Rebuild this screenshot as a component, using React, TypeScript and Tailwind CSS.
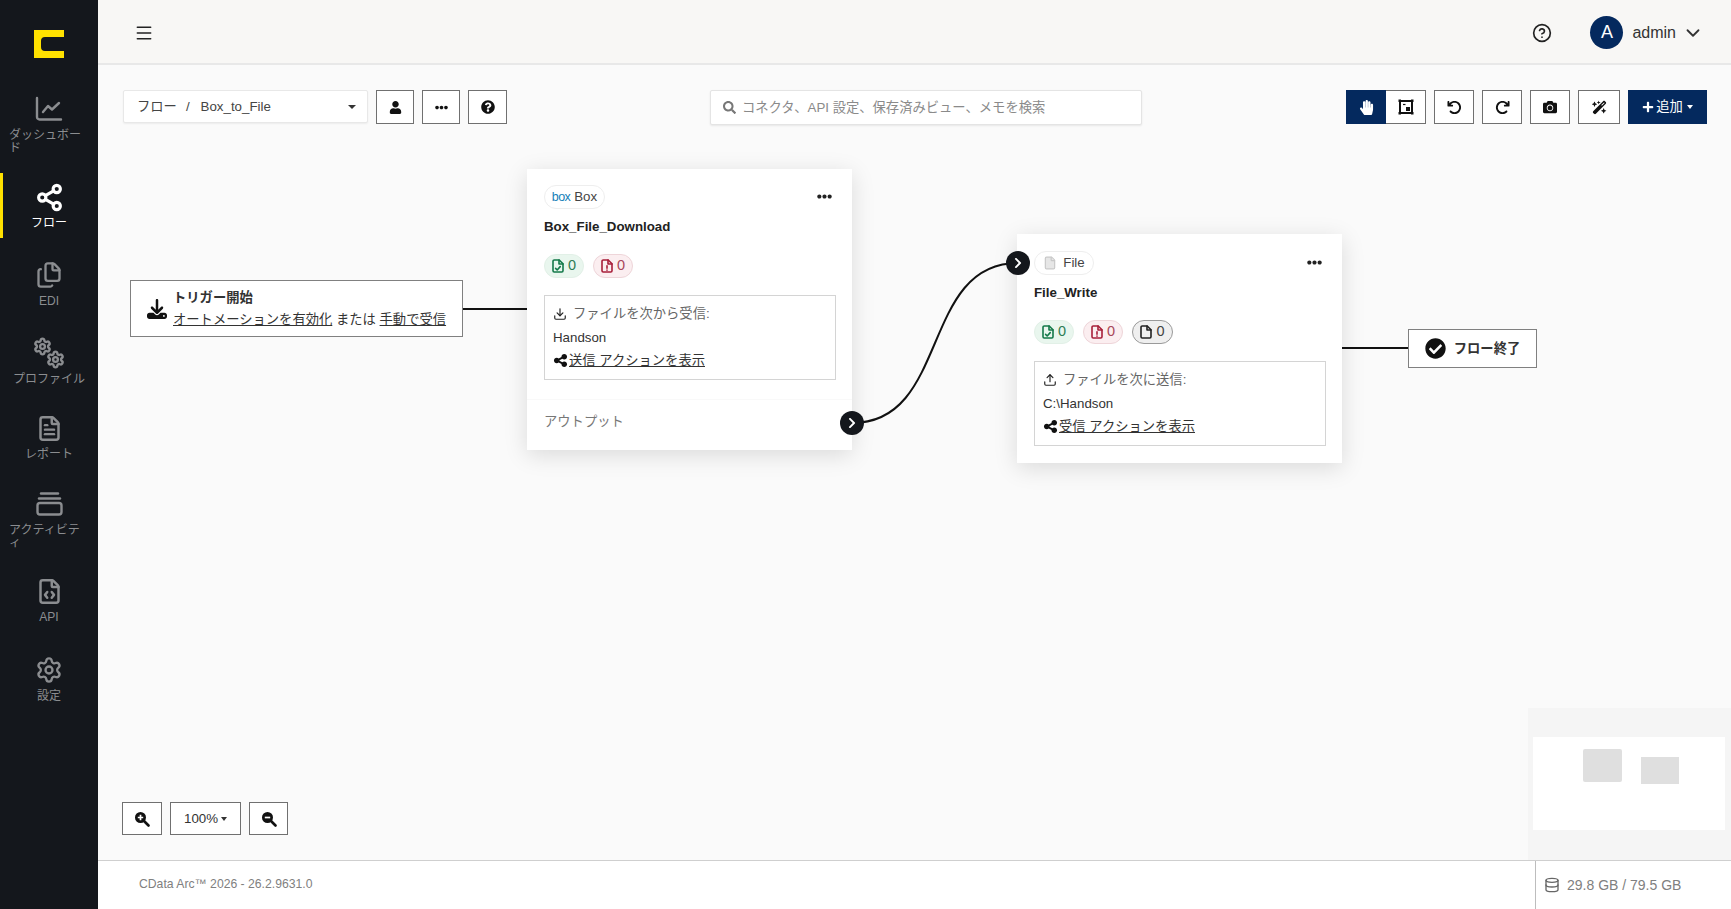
import React from "react";
import { ChevronDown, CircleHelp, Database, Download, File as FileIcon, FileCode, FileText, Files, Menu, Settings, Share2, Upload } from "lucide-react";
import { FaCamera, FaCheckCircle, FaChevronRight, FaEllipsisH, FaHandPaper, FaPlus, FaQuestionCircle, FaSearch, FaUser } from "react-icons/fa";
import { FaArrowRotateLeft, FaArrowRotateRight, FaDownload, FaShareNodes, FaWandMagicSparkles } from "react-icons/fa6";

const FONT = "font-['Liberation_Sans','Noto_Sans_CJK_JP',sans-serif]";

function ChartIcon() {
  return (
    <svg width="28" height="26" viewBox="0 0 28 26" fill="none" stroke="currentColor" strokeWidth="2.4" strokeLinecap="round" strokeLinejoin="round">
      <path d="M2 2v19a2.5 2.5 0 0 0 2.5 2.5H26" />
      <path d="M8 16l5-6 4 3.5 7-6.5" />
    </svg>
  );
}
function CogsIcon() {
  return (
    <svg width="32" height="32" viewBox="0 0 32 32" fill="none" className="text-[#8b8d90]">
      <Settings x={0} y={0} width={19} height={19} strokeWidth={3} />
      <Settings x={13} y={13} width={19} height={19} strokeWidth={3} />
    </svg>
  );
}
function StackIcon() {
  return (
    <svg width="27" height="24" viewBox="0 0 27 24" fill="none" stroke="currentColor" strokeWidth="2.4" strokeLinecap="round">
      <path d="M5 1.5h17" />
      <path d="M3 6.5h21" />
      <rect x="1.5" y="11" width="24" height="11.5" rx="2.5" />
    </svg>
  );
}
function CropIcon() {
  return (
    <svg width="16" height="16" viewBox="0 0 16 16" fill="none" stroke="#111">
      <rect x="2" y="2" width="12" height="12" strokeWidth="2" />
      <rect x="0.500" y="0.500" width="2.500" height="2.500" fill="#111" strokeWidth="0" />
      <rect x="13" y="0.500" width="2.500" height="2.500" fill="#111" strokeWidth="0" />
      <rect x="0.500" y="13" width="2.500" height="2.500" fill="#111" strokeWidth="0" />
      <rect x="13" y="13" width="2.500" height="2.500" fill="#111" strokeWidth="0" />
      <rect x="8" y="8" width="4" height="4" fill="#111" strokeWidth="0" />
      <path d="M5 5.500h2.500" strokeWidth="1.200" />
    </svg>
  );
}
function ZoomIcon({ plus }: { plus?: boolean }) {
  return (
    <svg width="16" height="16" viewBox="0 0 16 16" fill="none">
      <circle cx="6.500" cy="6.500" r="5.500" fill="#111" />
      <path d="M10.500 10.500l4 4" stroke="#111" strokeWidth="2.600" strokeLinecap="round" />
      <path d={plus ? "M3.800 6.500h5.400M6.500 3.800v5.400" : "M3.800 6.500h5.400"} stroke="#fff" strokeWidth="1.700" />
    </svg>
  );
}
function FileMark({ kind, color }: { kind: "ok" | "err" | "none"; color: string }) {
  return (
    <svg width="12" height="14" viewBox="0 0 12 14" fill="none" stroke={color} strokeWidth="1.6" strokeLinejoin="round" strokeLinecap="round">
      <path d="M2.2 1h5l3.8 3.8v7a1.2 1.2 0 0 1-1.2 1.2H2.2A1.2 1.2 0 0 1 1 11.800V2.200A1.2 1.200 0 0 1 2.200 1z" />
      <path d="M7 1v4h4" />
      {kind === "ok" && <path d="M3.600 9.400l1.600 1.600 3-3.400" />}
      {kind === "err" && <path d="M6 6.800v2.400M6 11v.2" />}
    </svg>
  );
}

function NavItem({ icon, label, active, h }: { icon: React.ReactNode; label: string; active?: boolean; h: string }) {
  return (
    <div className={`flex flex-col items-center border-l-[3px] pr-[3px] ${h} ${active ? "border-[#ffe100] text-white pt-[11px] mb-3" : "border-transparent text-[#8b8d90] pt-3"}`}>
      <div className="h-[26px] flex items-center justify-center">{icon}</div>
      <div className="mt-[7px] max-w-[80px] text-[12px] leading-[12.5px]">{label}</div>
    </div>
  );
}

function ToolBtn({ children, w, h = "h-[34px]" }: { children: React.ReactNode; w: string; h?: string }) {
  return <div className={`${w} ${h} flex items-center justify-center bg-white border-[1.5px] border-[#707070] text-[#111] shrink-0`}>{children}</div>;
}

function Badge({ kind, w }: { kind: "ok" | "err" | "none"; w: string }) {
  const s =
    kind === "ok"
      ? { box: "bg-[#e9f6ee] border-[#e2f0e7] text-[#2d7d55]", c: "#14794a" }
      : kind === "err"
        ? { box: "bg-[#fbeef0] border-[#eed5d9] text-[#a8475a]", c: "#a81f3a" }
        : { box: "bg-[#efefef] border-[#9a9a9a] text-[#444]", c: "#222" };
  return (
    <div className={`${w} h-6 rounded-full border flex items-center justify-center gap-1 text-[14.5px] ${s.box}`}>
      <FileMark kind={kind} color={s.c} />
      <span>0</span>
    </div>
  );
}

function Pill({ w, gap, children }: { w: string; gap: string; children: React.ReactNode }) {
  return <div className={`${w} ${gap} h-6 rounded-full border border-[#eeeeee] bg-white flex items-center justify-center text-[13.3px] text-[#444]`}>{children}</div>;
}

function InfoBox({ up, label, value, action }: { up?: boolean; label: string; value: string; action: string }) {
  return (
    <div className="mt-[17px] h-[85px] border border-[#d4d4d4] px-2 pt-[6px] text-[13.3px] leading-[23.5px] text-[#333]">
      <div className="flex items-center gap-[6px] text-[#666]">
        {up ? <Upload size={14} strokeWidth={2} className="text-[#222]" /> : <Download size={14} strokeWidth={2} className="text-[#222]" />}
        <span>{label}</span>
      </div>
      <div>{value}</div>
      <div className="flex items-center">
        <FaShareNodes size={15} className="text-[#111] mr-[1px]" />
        <span className="underline text-[#333]">{action}</span>
      </div>
    </div>
  );
}

function Canvas() {
  return (
    <div className="relative flex-1 bg-[#fafafa] overflow-hidden">
      <div className="flex items-start pl-[25px] pr-6 pt-[25px]">
        <div className="w-[587px] flex gap-2 shrink-0">
          <div className="w-[245px] h-[33px] bg-white border border-[#e8e8e8] rounded-[2px] shadow-[0_1px_2px_rgba(0,0,0,0.06)] flex items-center pl-[13px] pr-[11px] text-[13.3px] text-[#444]">
            <span>フロー</span>
            <span className="ml-[9px]">/</span>
            <span className="ml-[11px]">Box_to_File</span>
            <span className="ml-auto w-0 h-0 border-x-[4px] border-x-transparent border-t-[4px] border-t-[#333]" />
          </div>
          <ToolBtn w="w-[38px]"><FaUser size={13} /></ToolBtn>
          <ToolBtn w="w-[38px]"><FaEllipsisH size={13} /></ToolBtn>
          <ToolBtn w="w-[39px]"><FaQuestionCircle size={14} /></ToolBtn>
        </div>
        <div className="w-[432px] h-[35px] bg-white border border-[#e4e4e4] rounded-[2px] shadow-[0_1px_2px_rgba(0,0,0,0.08)] flex items-center pl-3 gap-[6px] text-[13.3px] text-[#8a8a8a]">
          <FaSearch size={13} className="text-[#777]" />
          <span>コネクタ、API 設定、保存済みビュー、メモを検索</span>
        </div>
        <div className="ml-auto flex gap-2">
          <div className="flex">
            <div className="w-10 h-[34px] bg-[#04295e] flex items-center justify-center text-white"><FaHandPaper size={15} /></div>
            <div className="w-10 h-[34px] bg-white border-[1.5px] border-l-0 border-[#707070] flex items-center justify-center"><CropIcon /></div>
          </div>
          <ToolBtn w="w-10"><FaArrowRotateLeft size={15} /></ToolBtn>
          <ToolBtn w="w-10"><FaArrowRotateRight size={15} /></ToolBtn>
          <ToolBtn w="w-10"><FaCamera size={14} /></ToolBtn>
          <ToolBtn w="w-[42px]"><FaWandMagicSparkles size={15} /></ToolBtn>
          <div className="w-[79px] h-[34px] bg-[#04295e] text-white flex items-center justify-center text-[13.3px] gap-[2px]">
            <FaPlus size={12} />
            <span>追加</span>
            <span className="ml-[2px] w-0 h-0 border-x-[3.5px] border-x-transparent border-t-[4px] border-t-white" />
          </div>
        </div>
      </div>

      <svg className="absolute left-0 top-0" width="1633" height="795" fill="none" stroke="#111">
        <path d="M364 244H430" strokeWidth="2" />
        <path d="M1244 283H1310" strokeWidth="2" />
        <path d="M754 358C852 358 822 198 920 198" strokeWidth="2" />
      </svg>

      <div className="absolute left-8 top-[215px] w-[333px] h-[57px] bg-white border-[1.5px] border-[#808080] flex items-center pl-4">
        <FaDownload size={20} className="text-[#111] shrink-0" />
        <div className="ml-[6px] text-[13.3px] leading-[22px] text-[#333]">
          <div className="font-bold">トリガー開始</div>
          <div><span className="underline">オートメーションを有効化</span> または <span className="underline">手動で受信</span></div>
        </div>
      </div>

      <div className="absolute left-[429px] top-[104px] w-[325px] h-[281px] bg-white shadow-[0_5px_22px_rgba(0,0,0,0.13)] flex flex-col">
        <div className="pl-[17px] pr-4 pt-4">
          <div className="flex items-center justify-between pr-1">
            <Pill w="w-[61px]" gap="gap-[4px]"><span className="text-[#1580b8] text-[12.5px] tracking-[-0.6px]">box</span><span>Box</span></Pill>
            <FaEllipsisH size={15} className="text-[#222] -mt-[2px]" />
          </div>
          <div className="mt-2 text-[13.3px] font-bold leading-5 text-[#222]">Box_File_Download</div>
          <div className="mt-[17px] flex gap-[9px]">
            <Badge kind="ok" w="w-10" />
            <Badge kind="err" w="w-10" />
          </div>
          <InfoBox label="ファイルを次から受信:" value="Handson" action="送信 アクションを表示" />
        </div>
        <div className="mt-[19px] flex-1 border-t border-[#f9f9f9] px-[17px] pt-3 text-[13.3px] text-[#777]">アウトプット</div>
      </div>

      <div className="absolute left-[919px] top-[169px] w-[325px] h-[229px] bg-white shadow-[0_5px_22px_rgba(0,0,0,0.13)]">
        <div className="pl-[17px] pr-4 pt-[17px]">
          <div className="flex items-center justify-between pr-1">
            <Pill w="w-[60px]" gap="gap-[6px]"><FileIcon size={14} fill="#e6e6e6" stroke="#c8c8c8" /><span>File</span></Pill>
            <FaEllipsisH size={15} className="text-[#222] -mt-[2px]" />
          </div>
          <div className="mt-2 text-[13.3px] font-bold leading-5 text-[#222]">File_Write</div>
          <div className="mt-[17px] flex gap-[9px]">
            <Badge kind="ok" w="w-10" />
            <Badge kind="err" w="w-10" />
            <Badge kind="none" w="w-[41px]" />
          </div>
          <InfoBox up label="ファイルを次に送信:" value="C:\Handson" action="受信 アクションを表示" />
        </div>
      </div>

      <div className="absolute left-[742px] top-[346px] w-6 h-6 rounded-full bg-[#14171c] flex items-center justify-center text-white"><FaChevronRight size={12} /></div>
      <div className="absolute left-[908px] top-[186px] w-6 h-6 rounded-full bg-[#14171c] flex items-center justify-center text-white"><FaChevronRight size={12} /></div>

      <div className="absolute left-[1310px] top-[264px] w-[129px] h-[39px] bg-white border-[1.5px] border-[#808080] flex items-center justify-center gap-[8px] text-[13.3px] font-bold text-[#333]">
        <FaCheckCircle size={21} className="text-[#111]" />
        <span>フロー終了</span>
      </div>

      <div className="absolute left-6 bottom-[25px] flex gap-2">
        <ToolBtn w="w-10" h="h-[33px]"><ZoomIcon plus /></ToolBtn>
        <div className="w-[71px] h-[33px] bg-white border-[1.5px] border-[#707070] flex items-center justify-center gap-[3px] text-[13.3px] text-[#333]">
          <span>100%</span>
          <span className="w-0 h-0 border-x-[3.5px] border-x-transparent border-t-[4px] border-t-[#333]" />
        </div>
        <ToolBtn w="w-[39px]" h="h-[33px]"><ZoomIcon /></ToolBtn>
      </div>

      <div className="absolute right-0 bottom-0 w-[203px] h-[152px] bg-[#f5f5f5]">
        <div className="absolute left-[5px] top-[29px] w-[192px] h-[93px] bg-white">
          <div className="absolute left-[50px] top-[12px] w-[39px] h-[33px] rounded-[2px] bg-[#dfdfdf]" />
          <div className="absolute left-[108px] top-[20px] w-[38px] h-[27px] bg-[#dfdfdf]" />
        </div>
      </div>
    </div>
  );
}

export default function App() {
  return (
    <div className={`flex h-screen w-full overflow-hidden ${FONT}`}>
      <aside className="w-[98px] shrink-0 bg-[#14171c] flex flex-col">
        <div className="h-[84px] pl-[34px] pt-[30px]">
          <svg width="30" height="28" viewBox="0 0 30 28">
            <path d="M0 0h30v7H11q-4 0-4 4v6q0 4 4 4h19v7H0z" fill="#ffe100" />
          </svg>
        </div>
        <NavItem h="h-[89px]" label="ダッシュボード" icon={<ChartIcon />} />
        <NavItem h="h-[65px]" active label="フロー" icon={<Share2 size={29} strokeWidth={2.6} />} />
        <NavItem h="h-[78px]" label="EDI" icon={<Files size={28} strokeWidth={2} />} />
        <NavItem h="h-[75px]" label="プロファイル" icon={<CogsIcon />} />
        <NavItem h="h-[76px]" label="レポート" icon={<FileText size={27} strokeWidth={2.2} />} />
        <NavItem h="h-[87px]" label="アクティビティ" icon={<StackIcon />} />
        <NavItem h="h-[79px]" label="API" icon={<FileCode size={27} strokeWidth={2.2} />} />
        <NavItem h="h-[70px]" label="設定" icon={<Settings size={28} strokeWidth={2} />} />
      </aside>
      <main className="flex-1 min-w-0 flex flex-col">
        <header className="h-[65px] shrink-0 bg-[#f8f7f5] border-b-2 border-[#e8e8e8] flex items-center pl-[36px] pr-[27px] pt-[2px] text-[#333]">
          <Menu size={20} strokeWidth={1.8} className="text-[#222]" />
          <CircleHelp size={20} strokeWidth={2} className="ml-auto text-[#222]" />
          <div className="ml-[38px] w-[33px] h-[33px] rounded-full bg-[#04295e] text-white text-[18px] flex items-center justify-center">A</div>
          <span className="ml-[9px] text-[16px]">admin</span>
          <ChevronDown size={22} strokeWidth={2} className="ml-[6px]" />
        </header>
        <Canvas />
        <footer className="h-[49px] shrink-0 bg-white border-t border-[#cfcfcf] flex items-stretch text-[#808080]">
          <div className="pl-[41px] flex items-center text-[12.2px] pb-[2px]">CData Arc™ 2026 - 26.2.9631.0</div>
          <div className="ml-auto w-[196px] border-l border-[#bdbdbd] flex items-center pl-2 gap-[7px] text-[14px]">
            <Database size={16} strokeWidth={2} className="text-[#666]" />
            <span>29.8 GB / 79.5 GB</span>
          </div>
        </footer>
      </main>
    </div>
  );
}
